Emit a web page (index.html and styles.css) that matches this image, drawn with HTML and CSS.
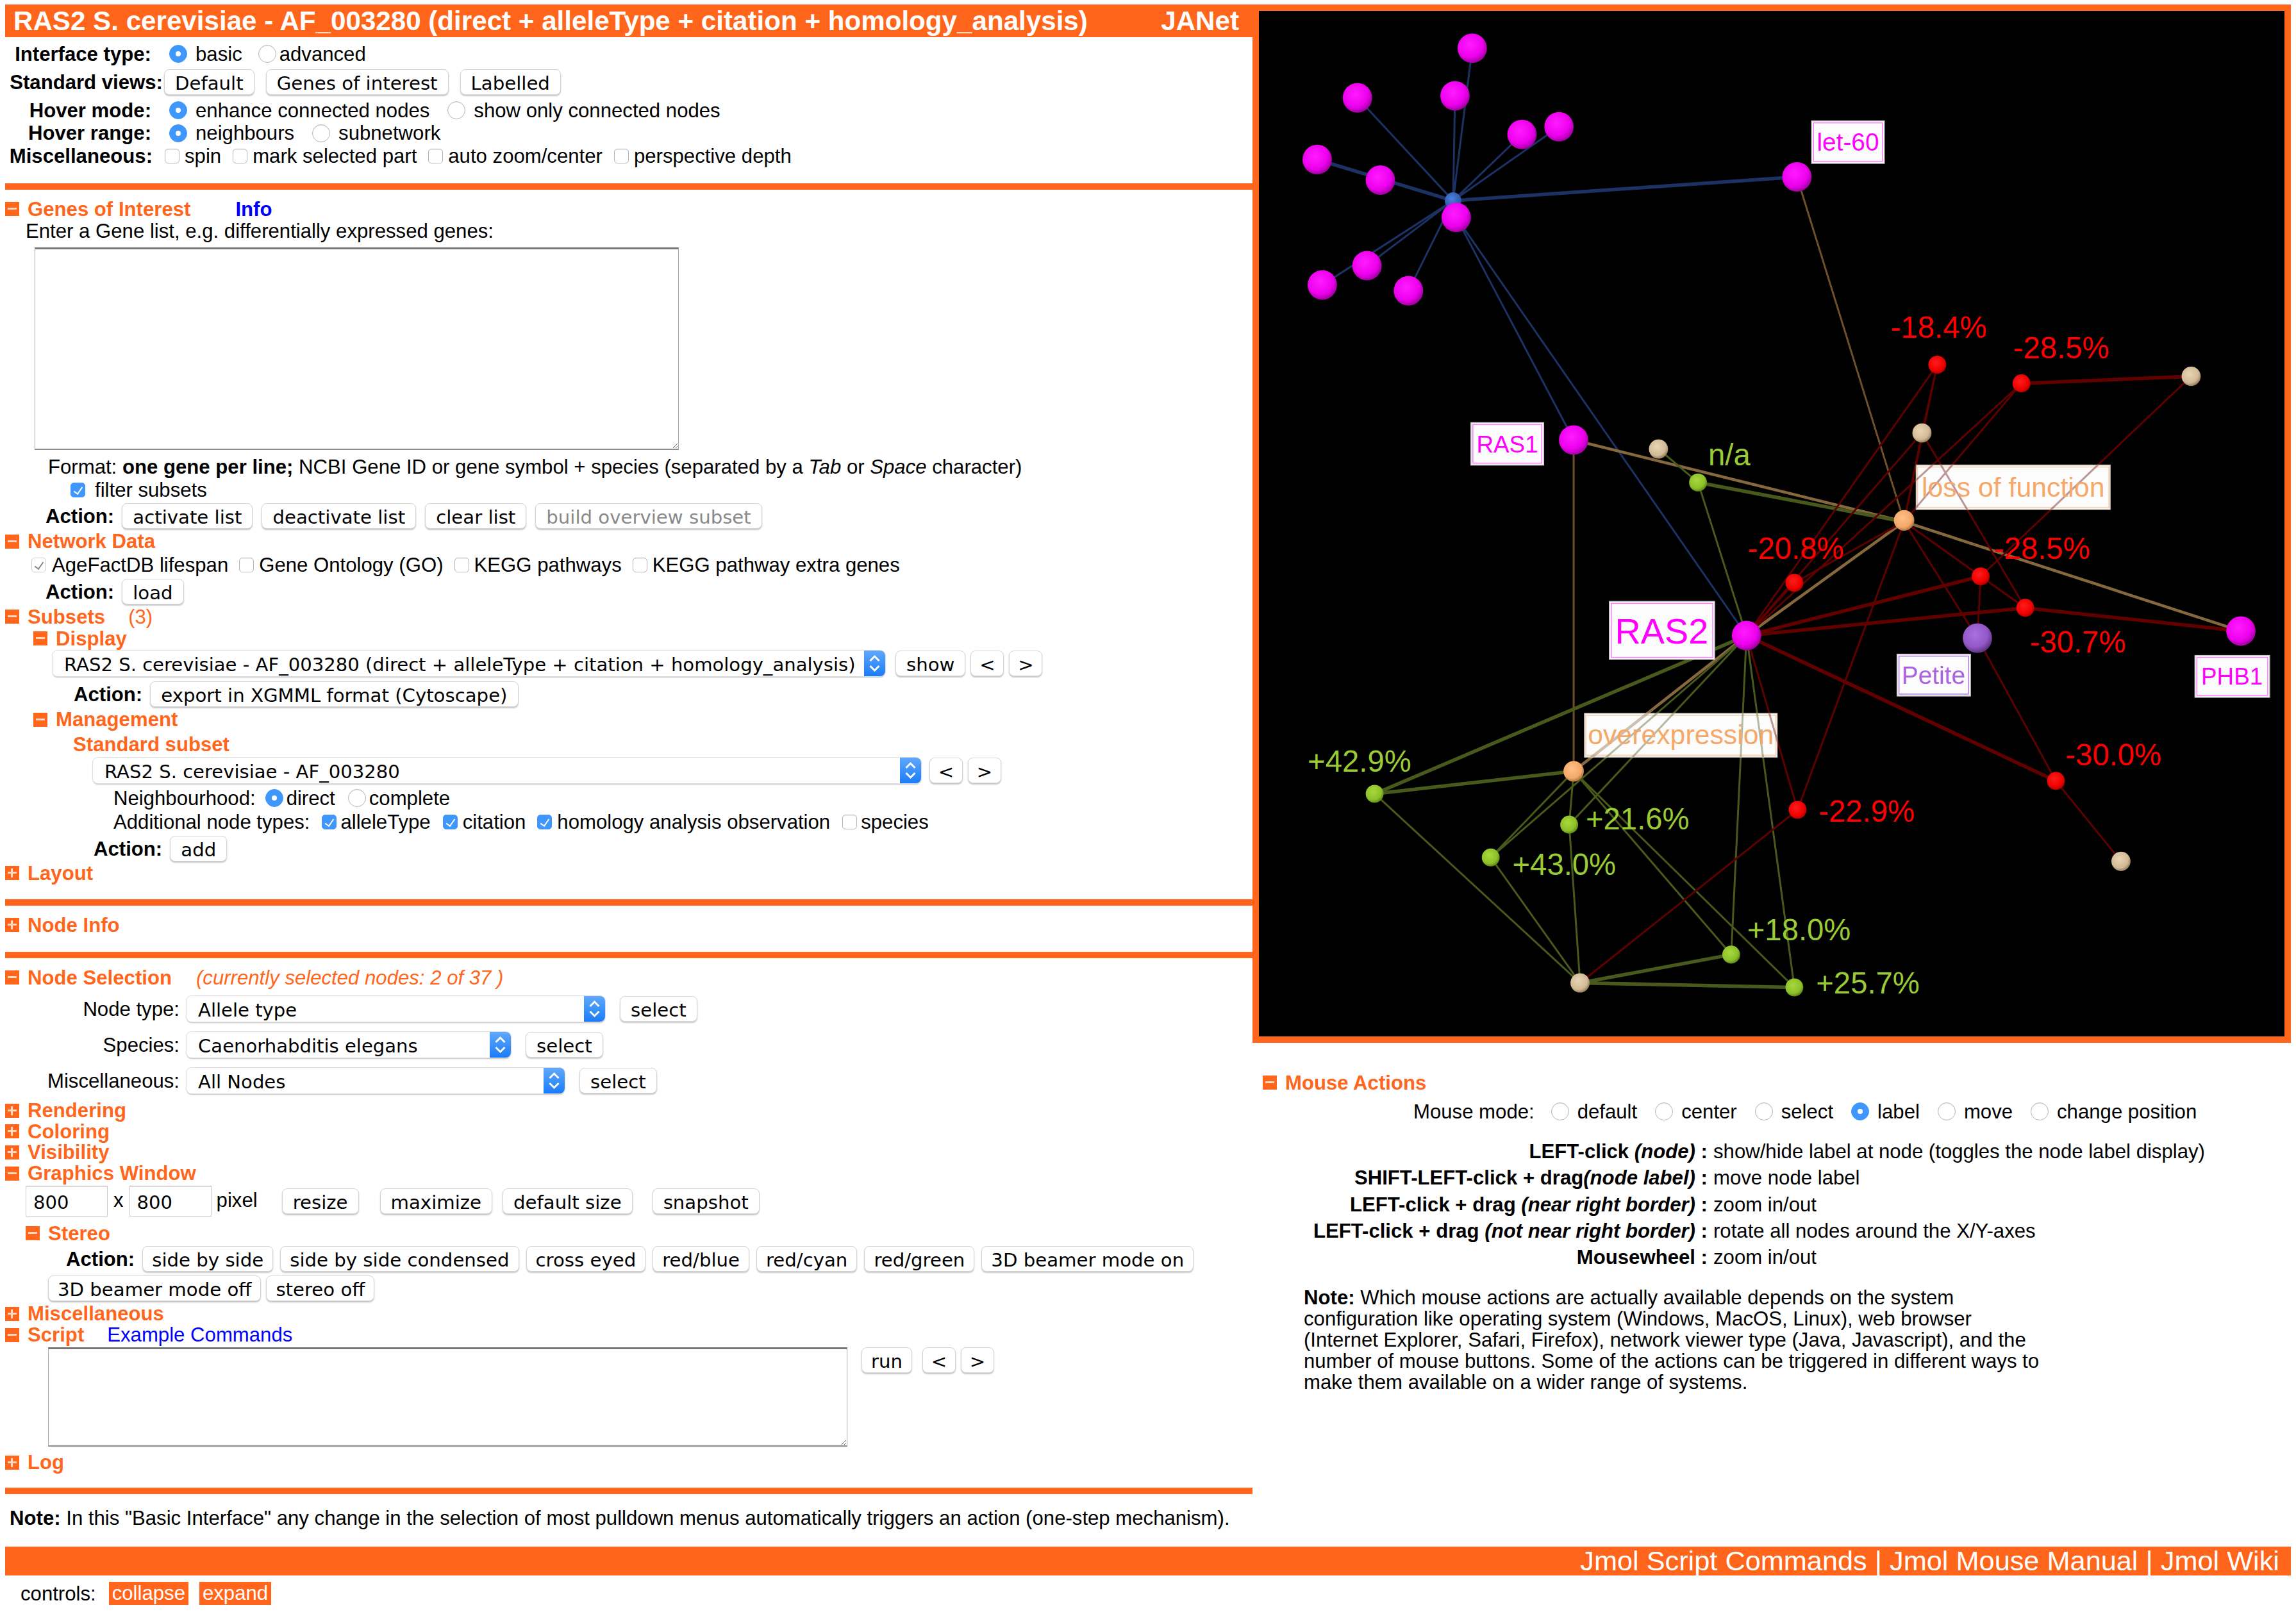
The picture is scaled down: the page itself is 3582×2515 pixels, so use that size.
FILE: index.html
```html
<!DOCTYPE html>
<html lang="en">
<head>
<meta charset="utf-8">
<title>JANet</title>
<link rel="stylesheet" href="styles.css">
</head>
<body>
<div class="page">
  <div class="top">
    <div class="left">
      <div class="title"><span>RAS2 S. cerevisiae - AF_003280 (direct + alleleType + citation + homology_analysis)</span><span>JANet</span></div>

      <div class="row mt8 h36"><b class="lbl w228">Interface type:</b><label class="opt ml28"><input type="radio" checked>basic</label><label class="opt tight ml25"><input type="radio">advanced</label></div>
      <div class="row mt6 h40"><b class="lbl w246">Standard views:</b><button class="btn ml2">Default</button><button class="btn ml18">Genes of interest</button><button class="btn ml18">Labelled</button></div>
      <div class="row mt6 h36"><b class="lbl w228">Hover mode:</b><label class="opt ml28"><input type="radio" checked>enhance connected nodes</label><label class="opt ml28"><input type="radio">show only connected nodes</label></div>
      <div class="row h35"><b class="lbl w228">Hover range:</b><label class="opt ml28"><input type="radio" checked>neighbours</label><label class="opt ml28"><input type="radio">subnetwork</label></div>
      <div class="row h36"><b class="lbl w230">Miscellaneous:</b><label class="opt small ml19"><input type="checkbox">spin</label><label class="opt small ml18"><input type="checkbox">mark selected part</label><label class="opt small ml18"><input type="checkbox">auto zoom/center</label><label class="opt small ml18"><input type="checkbox">perspective depth</label></div>
      <div class="bar mt25"></div>

      <div class="row head mt12 h36"><i class="ico minus"></i>Genes of Interest<a class="link ml70">Info</a></div>
      <div class="row pl32 h32">Enter a Gene list, e.g. differentially expressed genes:</div>
      <textarea class="area gene mt10"></textarea>
      <div class="row pl67 mt10 h32"><span>Format: <b>one gene per line;</b> NCBI Gene ID or gene symbol + species (separated by a <em>Tab</em> or <em>Space</em> character)</span></div>
      <div class="row pl102 mt4 h32"><label class="opt small gap15"><input type="checkbox" checked>filter subsets</label></div>
      <div class="row pl63 mt5 h40"><b class="action">Action:</b><button class="btn">activate list</button><button class="btn ml14">deactivate list</button><button class="btn ml14">clear list</button><button class="btn ml14 off">build overview subset</button></div>

      <div class="row head mt3 h33"><i class="ico minus"></i>Network Data</div>
      <div class="row pl41 mt4 h32"><label class="opt small gap9"><input type="checkbox" class="dim" checked>AgeFactDB lifespan</label><label class="opt small ml17"><input type="checkbox">Gene Ontology (GO)</label><label class="opt small ml17"><input type="checkbox">KEGG pathways</label><label class="opt small ml17"><input type="checkbox">KEGG pathway extra genes</label></div>
      <div class="row pl63 mt6 h40"><b class="action">Action:</b><button class="btn">load</button></div>

      <div class="row head mt2 h34"><i class="ico minus"></i>Subsets<span class="count">(3)</span></div>
      <div class="row head sub mt0 h34"><i class="ico minus"></i>Display</div>
      <div class="row pl74 mt2 h40"><div class="select sel-display"><span>RAS2 S. cerevisiae - AF_003280 (direct + alleleType + citation + homology_analysis)</span><i class="arrows"><svg viewBox="0 0 24 40"><path d="M5 16l7-7 7 7M5 24l7 7 7-7"/></svg></i></div><button class="btn ml16">show</button><button class="btn nav ml8">&lt;</button><button class="btn nav ml8">&gt;</button></div>
      <div class="row pl107 mt8 h40"><b class="action">Action:</b><button class="btn">export in XGMML format (Cytoscape)</button></div>

      <div class="row head sub mt3 h33"><i class="ico minus"></i>Management</div>
      <div class="row head plain pl106 mt5 h34">Standard subset</div>
      <div class="row pl137 mt4 h40"><div class="select sel-std"><span>RAS2 S. cerevisiae - AF_003280</span><i class="arrows"><svg viewBox="0 0 24 40"><path d="M5 16l7-7 7 7M5 24l7 7 7-7"/></svg></i></div><button class="btn nav ml13">&lt;</button><button class="btn nav ml8">&gt;</button></div>
      <div class="row pl169 mt6 h34">Neighbourhood:<label class="opt tight ml15"><input type="radio" checked>direct</label><label class="opt tight ml20"><input type="radio">complete</label></div>
      <div class="row pl169 mt3 h34">Additional node types:<label class="opt small gap7 ml19"><input type="checkbox" checked>alleleType</label><label class="opt small ml19"><input type="checkbox" checked>citation</label><label class="opt small ml18"><input type="checkbox" checked>homology analysis observation</label><label class="opt small gap7 ml19"><input type="checkbox">species</label></div>
      <div class="row pl138 mt5 h40"><b class="action">Action:</b><button class="btn">add</button></div>
      <div class="row head mt1 h34"><i class="ico plus"></i>Layout</div>
      <div class="bar mt24"></div>

      <div class="row head mt13 h34"><i class="ico plus"></i>Node Info</div>
      <div class="bar mt25"></div>

      <div class="row head mt13 h34"><i class="ico minus"></i>Node Selection<em class="note-sel">(currently selected nodes: 2 of 37 )</em></div>
      <div class="row mt12 h40"><span class="lbl plainlbl w272">Node type:</span><div class="select sel-a ml11"><span>Allele type</span><i class="arrows"><svg viewBox="0 0 24 40"><path d="M5 16l7-7 7 7M5 24l7 7 7-7"/></svg></i></div><button class="btn ml23">select</button></div>
      <div class="row mt16 h40"><span class="lbl plainlbl w272">Species:</span><div class="select sel-b ml11"><span>Caenorhabditis elegans</span><i class="arrows"><svg viewBox="0 0 24 40"><path d="M5 16l7-7 7 7M5 24l7 7 7-7"/></svg></i></div><button class="btn ml23">select</button></div>
      <div class="row mt16 h40"><span class="lbl plainlbl w272">Miscellaneous:</span><div class="select sel-c ml11"><span>All Nodes</span><i class="arrows"><svg viewBox="0 0 24 40"><path d="M5 16l7-7 7 7M5 24l7 7 7-7"/></svg></i></div><button class="btn ml23">select</button></div>

      <div class="row head mt10 h33"><i class="ico plus"></i>Rendering</div>
      <div class="row head h32"><i class="ico plus"></i>Coloring</div>
      <div class="row head h33"><i class="ico plus"></i>Visibility</div>
      <div class="row head h33"><i class="ico minus"></i>Graphics Window</div>
      <div class="row pl32 mt3 h48 top-align"><input class="num" value="800"><span class="x">x</span><input class="num" value="800"><span class="px">pixel</span><button class="btn ml38 down">resize</button><button class="btn ml33 down">maximize</button><button class="btn ml16 down">default size</button><button class="btn ml31 down">snapshot</button></div>

      <div class="row head stereo mt9 h34"><i class="ico minus"></i>Stereo</div>
      <div class="row pl95 mt3 h40"><b class="action">Action:</b><button class="btn tightb">side by side</button><button class="btn tightb ml11">side by side condensed</button><button class="btn tightb ml11">cross eyed</button><button class="btn tightb ml11">red/blue</button><button class="btn tightb ml11">red/cyan</button><button class="btn tightb ml11">red/green</button><button class="btn tightb ml11">3D beamer mode on</button></div>
      <div class="row pl67 mt6 h40"><button class="btn tightb">3D beamer mode off</button><button class="btn tightb ml8">stereo off</button></div>

      <div class="row head mt3 h33"><i class="ico plus"></i>Miscellaneous</div>
      <div class="row head h33"><i class="ico minus"></i>Script<a class="link plainlink ml36">Example Commands</a></div>
      <div class="row pl67 mt3 scriptrow"><textarea class="area script"></textarea><button class="btn tightb ml22">run</button><button class="btn nav ml16">&lt;</button><button class="btn nav ml8">&gt;</button></div>
      <div class="row head mt8 h33"><i class="ico plus"></i>Log</div>
      <div class="bar mt23"></div>
      <div class="row pl7 mt21 h33"><span><b>Note:</b> In this "Basic Interface" any change in the selection of most pulldown menus automatically triggers an action (one-step mechanism).</span></div>
    </div>

    <div class="right">
      <div class="viewer">
        <svg class="graph" viewBox="0 0 1600 1600" width="1600" height="1600">
          <defs>
            <radialGradient id="gm" cx=".42" cy=".38" r=".65"><stop offset="0" stop-color="#ff1cff"/><stop offset=".65" stop-color="#ee00ee"/><stop offset="1" stop-color="#980098"/></radialGradient>
            <radialGradient id="gr" cx=".42" cy=".38" r=".65"><stop offset="0" stop-color="#ff1c1c"/><stop offset=".7" stop-color="#ee0000"/><stop offset="1" stop-color="#a80000"/></radialGradient>
            <radialGradient id="gt" cx=".42" cy=".38" r=".65"><stop offset="0" stop-color="#e8d4b4"/><stop offset=".7" stop-color="#d2ba96"/><stop offset="1" stop-color="#8a7658"/></radialGradient>
            <radialGradient id="gg" cx=".42" cy=".38" r=".65"><stop offset="0" stop-color="#a8d83c"/><stop offset=".7" stop-color="#8cc02a"/><stop offset="1" stop-color="#587c14"/></radialGradient>
            <radialGradient id="go" cx=".42" cy=".38" r=".65"><stop offset="0" stop-color="#ffc088"/><stop offset=".7" stop-color="#f2a868"/><stop offset="1" stop-color="#a87040"/></radialGradient>
            <radialGradient id="gp" cx=".42" cy=".38" r=".65"><stop offset="0" stop-color="#a870e0"/><stop offset=".65" stop-color="#9458c8"/><stop offset="1" stop-color="#553078"/></radialGradient>
            <radialGradient id="gb" cx=".42" cy=".38" r=".65"><stop offset="0" stop-color="#4c80e0"/><stop offset="1" stop-color="#2850a0"/></radialGradient>
            <clipPath id="labelclip"><rect x="1030" y="707" width="304" height="69"/><rect x="510" y="1093" width="302" height="68"/></clipPath>
            <g id="edges">
              <path class="e blue" d="M304 296L334 59M304 296L154 136M304 296L307 133M304 296L470 181M304 296L412 193M304 296L169 397M304 296L99 427M304 296L234 436M309 322L493 668M309 322L764 972"/>
              <path class="e blue thick" d="M304 296L91 232M304 296L843 259"/>
              <path class="e brown" d="M843 259L1011 795M493 668L493 1183"/>
              <path class="e tan" d="M493 668L1011 795M1011 795L1539 965M764 972L1011 795M764 972L493 1183"/>
              <path class="e green" d="M626 682L688 734M688 734L764 972M764 972L363 1317M764 972L486 1266M764 972L740 1468M764 972L839 1519M493 1183L363 1317M493 1183L486 1266M493 1183L740 1468M493 1183L839 1519M181 1218L503 1512M363 1317L503 1512M486 1266L503 1512"/>
              <path class="e green thick" d="M688 734L1011 795M764 972L181 1218M493 1183L181 1218M503 1512L740 1468M503 1512L839 1519"/>
              <path class="e red" d="M764 972L1063 551M764 972L1195 580M764 972L1039 657M764 972L839 890M764 972L844 1243M844 1243L503 1512M844 1243L1011 795M1011 795L1126 976M1126 976L1249 1198M1039 657L1063 551M1039 657L1011 795M1039 657L1201 929M1461 569L1131 880M1131 880L1126 976M1249 1198L1351 1323M1195 580L1011 795M1063 551L1011 795M839 890L1011 795M1011 795L1131 880M1011 795L1201 929M1131 880L1201 929"/>
              <path class="e red thick" d="M764 972L1131 880M764 972L1201 929M764 972L1249 1198M1195 580L1461 569M1201 929L1539 965"/>
            </g>
          </defs>
          <g transform="translate(.44 -.93) scale(.9952 1.0036)">
          <use href="#edges"/>
          <circle class="n" cx="334" cy="59" r="23" fill="url(#gm)"/><circle cx="154" cy="136" r="23" fill="url(#gm)"/><circle cx="307" cy="133" r="23" fill="url(#gm)"/><circle cx="470" cy="181" r="23" fill="url(#gm)"/><circle cx="412" cy="193" r="23" fill="url(#gm)"/><circle cx="91" cy="232" r="23" fill="url(#gm)"/><circle cx="190" cy="264" r="23" fill="url(#gm)"/><circle cx="304" cy="296" r="13" fill="url(#gb)"/><circle cx="309" cy="322" r="23" fill="url(#gm)"/><circle cx="169" cy="397" r="23" fill="url(#gm)"/><circle cx="99" cy="427" r="23" fill="url(#gm)"/><circle cx="234" cy="436" r="23" fill="url(#gm)"/><circle cx="843" cy="259" r="23" fill="url(#gm)"/><circle cx="493" cy="668" r="23" fill="url(#gm)"/>
          <circle cx="764" cy="972" r="23" fill="url(#gm)"/><circle cx="1539" cy="965" r="23" fill="url(#gm)"/><circle cx="1126" cy="976" r="23" fill="url(#gp)"/>
          <circle cx="626" cy="682" r="15" fill="url(#gt)"/><circle cx="1039" cy="657" r="15" fill="url(#gt)"/><circle cx="1461" cy="569" r="15" fill="url(#gt)"/><circle cx="1351" cy="1323" r="15" fill="url(#gt)"/><circle cx="503" cy="1512" r="15" fill="url(#gt)"/>
          <circle cx="1063" cy="551" r="14" fill="url(#gr)"/><circle cx="1195" cy="580" r="14" fill="url(#gr)"/><circle cx="839" cy="890" r="14" fill="url(#gr)"/><circle cx="1131" cy="880" r="14" fill="url(#gr)"/><circle cx="1201" cy="929" r="14" fill="url(#gr)"/><circle cx="844" cy="1243" r="14" fill="url(#gr)"/><circle cx="1249" cy="1198" r="14" fill="url(#gr)"/>
          <circle cx="688" cy="734" r="14" fill="url(#gg)"/><circle cx="181" cy="1218" r="14" fill="url(#gg)"/><circle cx="486" cy="1266" r="14" fill="url(#gg)"/><circle cx="363" cy="1317" r="14" fill="url(#gg)"/><circle cx="740" cy="1468" r="14" fill="url(#gg)"/><circle cx="839" cy="1519" r="14" fill="url(#gg)"/>
          <circle cx="1011" cy="793" r="16" fill="url(#go)"/><circle cx="493" cy="1183" r="16" fill="url(#go)"/>

          <g class="tag">
            <rect class="out" x="866" y="172" width="114" height="66"/><rect class="in mg" x="869" y="175" width="108" height="60"/>
            <rect class="out" x="332" y="641" width="114" height="66"/><rect class="in mg" x="335" y="644" width="108" height="60"/>
            <rect class="out" x="549" y="919" width="165" height="90"/><rect class="in mg" x="552" y="922" width="159" height="84"/>
            <rect class="out" x="1467" y="1003" width="117" height="65"/><rect class="in mg" x="1470" y="1006" width="111" height="59"/>
            <rect class="out" x="1000" y="1001" width="115" height="65"/><rect class="in pu" x="1003" y="1004" width="109" height="59"/>
            <rect class="out" x="1030" y="707" width="304" height="69"/><rect class="in or" x="1032" y="710" width="300" height="63"/>
            <rect class="out" x="510" y="1093" width="302" height="68"/><rect class="in or" x="512" y="1096" width="298" height="62"/>
          </g>
          <use href="#edges" clip-path="url(#labelclip)" opacity=".4"/>

          <text class="t mag s39" x="923" y="218">let-60</text>
          <text class="t mag s37" x="389" y="687">RAS1</text>
          <text class="t mag s56" x="631" y="984">RAS2</text>
          <text class="t mag s37" x="1525" y="1048">PHB1</text>
          <text class="t pur s39" x="1057" y="1047">Petite</text>
          <text class="t org s43" x="1182" y="756">loss of function</text>
          <text class="t org s43" x="661" y="1141">overexpression</text>

          <text class="v rd" x="990" y="509">-18.4%</text>
          <text class="v rd" x="1182" y="541">-28.5%</text>
          <text class="v rd" x="766" y="853">-20.8%</text>
          <text class="v rd" x="1152" y="853">-28.5%</text>
          <text class="v rd" x="1208" y="998">-30.7%</text>
          <text class="v rd" x="1264" y="1174">-30.0%</text>
          <text class="v rd" x="877" y="1261">-22.9%</text>
          <text class="v gr" x="704" y="707">n/a</text>
          <text class="v gr" x="76" y="1184">+42.9%</text>
          <text class="v gr" x="512" y="1273">+21.6%</text>
          <text class="v gr" x="397" y="1344">+43.0%</text>
          <text class="v gr" x="765" y="1446">+18.0%</text>
          <text class="v gr" x="873" y="1528">+25.7%</text>
          </g>
        </svg>
      </div>

      <div class="row head pl16 mt45 h34"><i class="ico minus"></i>Mouse Actions</div>
      <div class="row modes h34"><span class="modelbl">Mouse mode:</span><label class="opt"><input type="radio">default</label><label class="opt ml28"><input type="radio">center</label><label class="opt ml28"><input type="radio">select</label><label class="opt ml28"><input type="radio" checked>label</label><label class="opt ml28"><input type="radio">move</label><label class="opt ml28"><input type="radio">change position</label></div>
      <div class="keys">
        <b>LEFT-click <em>(node)</em> :</b><span>show/hide label at node (toggles the node label display)</span>
        <b>SHIFT-LEFT-click + drag<em>(node label)</em> :</b><span>move node label</span>
        <b>LEFT-click + drag <em>(near right border)</em> :</b><span>zoom in/out</span>
        <b>LEFT-click + drag <em>(not near right border)</em> :</b><span>rotate all nodes around the X/Y-axes</span>
        <b>Mousewheel :</b><span>zoom in/out</span>
      </div>
      <p class="mouse-note"><b>Note:</b> Which mouse actions are actually available depends on the system configuration like operating system (Windows, MacOS, Linux), web browser (Internet Explorer, Safari, Firefox), network viewer type (Java, Javascript), and the number of mouse buttons. Some of the actions can be triggered in different ways to make them available on a wider range of systems.</p>
    </div>
  </div>

  <div class="footer">Jmol Script Commands | Jmol Mouse Manual | Jmol Wiki</div>
  <div class="controls">controls: <a class="tagbtn first">collapse</a><a class="tagbtn">expand</a></div>
</div>
</body>
</html>
```

FILE: styles.css
```css
* { box-sizing: border-box; }
html, body { margin: 0; background: #fff; }
body { font: 31.15px/33px "Liberation Sans", Arial, sans-serif; color: #000; }
.page { width: 3582px; padding: 7px 8px 0; }
.top { display: flex; align-items: flex-start; }
.left { width: 1946px; flex: none; }
.right { width: 1620px; flex: none; }

.title { display: flex; justify-content: space-between; align-items: center; height: 51px; padding: 0 21px 0 13px; background: #ff661b; color: #fff; font-weight: bold; font-size: 42.15px; line-height: 51px; }
.row { display: flex; align-items: center; white-space: nowrap; }
.top-align { align-items: flex-start; }
.bar { height: 10px; background: #ff661b; }

.h32 { height: 32px; } .h33 { height: 33px; } .h34 { height: 34px; } .h35 { height: 35px; } .h36 { height: 36px; } .h40 { height: 40px; } .h48 { height: 48px; }
.mt0 { margin-top: 0; } .mt1 { margin-top: 1px; } .mt2 { margin-top: 2px; } .mt3 { margin-top: 3px; } .mt4 { margin-top: 4px; } .mt5 { margin-top: 5px; } .mt6 { margin-top: 6px; } .mt8 { margin-top: 8px; } .mt9 { margin-top: 9px; } .mt10 { margin-top: 10px; } .mt12 { margin-top: 12px; } .mt13 { margin-top: 13px; } .mt16 { margin-top: 16px; } .mt21 { margin-top: 21px; } .mt23 { margin-top: 23px; } .mt24 { margin-top: 24px; } .mt25 { margin-top: 25px; } .mt45 { margin-top: 45px; }
.ml2 { margin-left: 2px; } .ml8 { margin-left: 8px; } .ml11 { margin-left: 11px; } .ml13 { margin-left: 13px; } .ml14 { margin-left: 14px; } .ml15 { margin-left: 15px; } .ml16 { margin-left: 16px; } .ml17 { margin-left: 17px; } .ml18 { margin-left: 18px; } .ml19 { margin-left: 19px; } .ml20 { margin-left: 20px; } .ml22 { margin-left: 22px; } .ml23 { margin-left: 23px; } .ml25 { margin-left: 25px; } .ml28 { margin-left: 28px; } .ml31 { margin-left: 31px; } .ml33 { margin-left: 33px; } .ml36 { margin-left: 36px; } .ml38 { margin-left: 38px; } .ml70 { margin-left: 70px; }
.pl7 { padding-left: 7px; } .pl16 { padding-left: 16px; } .pl32 { padding-left: 32px; } .pl41 { padding-left: 41px; } .pl63 { padding-left: 63px; } .pl67 { padding-left: 67px; } .pl74 { padding-left: 74px; } .pl95 { padding-left: 95px; } .pl102 { padding-left: 102px; } .pl106 { padding-left: 106px; } .pl107 { padding-left: 107px; } .pl137 { padding-left: 137px; } .pl138 { padding-left: 138px; } .pl169 { padding-left: 169px; }

.lbl { text-align: right; flex: none; }
.plainlbl { font-weight: normal; }
.w228 { width: 228px; } .w230 { width: 230px; } .w246 { width: 246px; } .w272 { width: 272px; }

.opt { display: inline-flex; align-items: center; gap: 13px; }
.opt.tight { gap: 5px; }
.opt.small { gap: 8px; }
.opt.gap7 { gap: 6px; }
.opt.gap9 { gap: 9px; }
.opt.gap15 { gap: 15px; }

input[type=radio], input[type=checkbox] { appearance: none; margin: 0; flex: none; position: relative; background: #fff; border: 1px solid #b5b5b5; box-shadow: inset 0 1px 1px rgba(0,0,0,.08); }
input[type=radio] { width: 28px; height: 28px; border-radius: 50%; }
input[type=radio]:checked { background: #3f97fb; border-color: #3f97fb; box-shadow: none; }
input[type=radio]:checked::after { content: ""; position: absolute; left: 9px; top: 9px; width: 8px; height: 8px; border-radius: 50%; background: #fff; }
input[type=checkbox] { width: 23px; height: 23px; border-radius: 5px; }
input[type=checkbox]:checked { background: #3f97fb; border-color: #3f97fb; box-shadow: none; }
input[type=checkbox]:checked::after { content: ""; position: absolute; left: 7px; top: 3px; width: 6px; height: 12px; border: solid #fff; border-width: 0 2px 2px 0; transform: rotate(35deg); }
input[type=checkbox].dim:checked { background: #fff; border-color: #ccc; }
input[type=checkbox].dim:checked::after { border-color: #888; }

.btn { height: 40px; padding: 3px 16px 0; flex: none; background: #fff; border: 1px solid #d4d4d4; border-radius: 8px; box-shadow: 0 2px 2px rgba(0,0,0,.22); font: 29.2px/36px "DejaVu Sans", Verdana, sans-serif; color: #000; }
.btn.off { color: #8a8a8a; }
.btn.nav { width: 52px; padding: 3px 0 0; }
.btn.tightb { padding: 3px 14px 0; }
.btn.down { margin-top: 4px; }
.action { flex: none; margin-right: 12px; }

.select { display: flex; justify-content: space-between; align-items: stretch; height: 40px; flex: none; background: #fff; border-radius: 8px; box-shadow: 0 0 0 1px #dcdcdc, 0 2px 2px rgba(0,0,0,.25); font: 29.1px/44px "DejaVu Sans", Verdana, sans-serif; overflow: hidden; }
.select > span { padding-left: 18px; }
.arrows { display: block; width: 33px; flex: none; background: linear-gradient(#61a8fb, #1a7cf9); }
.arrows svg { display: block; width: 33px; height: 40px; fill: none; stroke: #fff; stroke-width: 3; }
.sel-display { width: 1299px; }
.sel-std { width: 1292px; }
.sel-a { width: 653px; }
.sel-b { width: 506px; }
.sel-c { width: 590px; }

.head { color: #ff661b; font-weight: bold; }
.ico { display: block; position: relative; flex: none; width: 22px; height: 22px; margin-right: 13px; background: #ff661b; }
.ico::before { content: ""; position: absolute; left: 4px; top: 9px; width: 14px; height: 3px; background: #ffd9c4; }
.ico.plus::after { content: ""; position: absolute; left: 9px; top: 4px; width: 3px; height: 14px; background: #ffd9c4; }
.sub { padding-left: 44px; }
.stereo { padding-left: 32px; }
.plain { padding-left: 106px; }
.count { font-weight: normal; margin-left: 36px; }
.note-sel { font-weight: normal; margin-left: 38px; }
.link { color: #00f; }
.plainlink { font-weight: normal; }

.area { display: block; margin-bottom: 0; background: #fff; border: 1px solid #a8a8a8; border-top: 3px solid #767676; border-bottom: 2px solid #8d8d8d; outline: none; }
.area.gene { width: 1005px; height: 316px; margin-left: 46px; }
.area.script { width: 1247px; height: 155px; flex: none; }
.scriptrow { align-items: flex-start; }

.num { width: 128px; height: 48px; padding: 4px 0 0 11px; flex: none; border: 1px solid #ccc; border-top-color: #999; background: #fff; font: 29px/36px "DejaVu Sans", Verdana, sans-serif; }
.x { margin: 6px 9px 0; }
.px { margin: 6px 0 0 8px; }

.viewer { width: 1620px; height: 1620px; border: 10px solid #ff661b; background: #000; }
.graph { display: block; }
.e { fill: none; stroke-width: 3; }
.e.thick { stroke-width: 5.5; }
.e.blue { stroke: #1d3264; }
.e.brown { stroke: #6e4f2c; }
.e.tan { stroke: #86683f; stroke-width: 4.5; }
.e.green { stroke: #48591b; }
.e.red { stroke: #5c0000; }
.e.red.thick { stroke: #620000; }
.tag rect { stroke-width: 1.5; }
.tag .out { fill: #fcfcfc; stroke: #c9c9c9; }
.tag .in { fill: none; }
.tag .mg { stroke: #ff7cff; }
.tag .pu { stroke: #b07ce8; }
.tag .or { stroke: #fbd0a8; }
.t { text-anchor: middle; font-family: "Liberation Sans", Arial, sans-serif; }
.s37 { font-size: 37px; } .s39 { font-size: 39px; } .s43 { font-size: 43px; } .s56 { font-size: 56px; }
.mag { fill: #ff00ff; }
.pur { fill: #aa62e0; }
.org { fill: #f5a868; }
.v { font: 47.5px "Liberation Sans", Arial, sans-serif; }
.rd { fill: #ff0000; }
.gr { fill: #9acb34; }

.modes { margin-top: 11px; padding-left: 251px; }
.modelbl { margin-right: 26px; }
.keys { display: grid; grid-template-columns: 710px 1fr; column-gap: 9px; grid-auto-rows: 41.3px; align-items: center; margin-top: 25px; }
.keys b { text-align: right; }
.mouse-note { width: 1155px; margin: 26px 0 0 80px; }

.footer { height: 45px; margin-top: 28px; padding-right: 18px; background: #ff661b; color: #fff; text-align: right; font-size: 43.3px; line-height: 45px; }
.controls { display: flex; align-items: center; height: 36px; margin-top: 10px; padding-left: 24px; }
.tagbtn { display: block; padding: 0 5px; background: #ff661b; color: #fff; line-height: 36px; margin-left: 17px; }
.tagbtn.first { margin-left: 20px; }
```
